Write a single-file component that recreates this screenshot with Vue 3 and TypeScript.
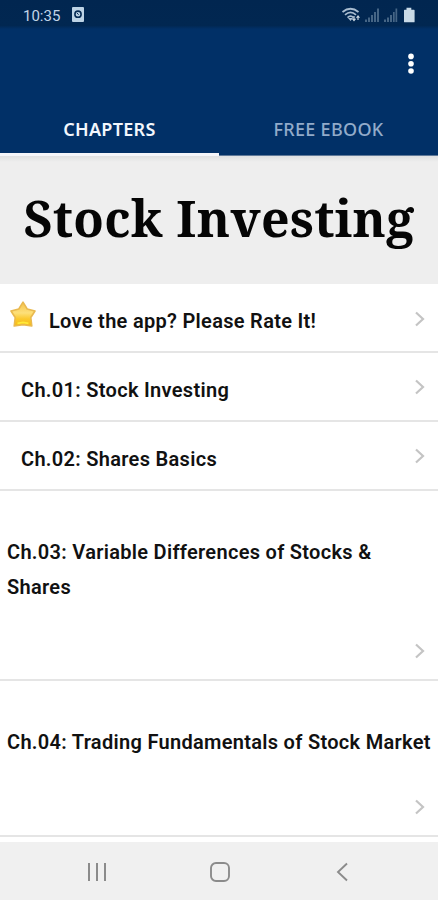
<script setup lang="ts">
interface Row {
  label: string
  kind: string
  star?: boolean
}

const rows: Row[] = [
  { label: 'Love the app? Please Rate It!', kind: 'rate', star: true },
  { label: 'Ch.01: Stock Investing', kind: 'short' },
  { label: 'Ch.02: Shares Basics', kind: 'short' },
  { label: 'Ch.03: Variable Differences of Stocks & Shares', kind: 'tall double' },
  { label: 'Ch.04: Trading Fundamentals of Stock Market', kind: 'tall single' },
]
</script>

<template>
  <div class="screen">
    <header class="header">
      <div class="status">
        <span class="time">10:35</span>
        <svg class="alarm" width="12" height="15" viewBox="0 0 12 15">
          <rect width="12" height="15" rx="1" fill="#bdd3e5" />
          <circle cx="6" cy="7.2" r="3.1" fill="none" stroke="#062b54" stroke-width="1.6" />
          <path d="M5 6l1.6 1.7" stroke="#062b54" stroke-width="1" />
        </svg>
        <svg class="signals" width="76" height="17" viewBox="0 0 76 17">
          <g fill="none" stroke="#a9bdd0" stroke-width="1.7">
            <path d="M1.500 5Q9.500-1.500 17.500 5" />
            <path d="M4 7.800Q9.500 3 15 7.800" />
            <path d="M6.500 10.600Q9.500 7.800 12.500 10.600" />
          </g>
          <path d="M9.500 14l-2.500-3h5z" fill="#a9bdd0" />
          <path d="M13 9v4M17 13V9" stroke="#c5d4e0" stroke-width="1.2" />
          <path d="M10.800 11.800h4.400L13 14.600zM14.900 10.700h4.200L17 7.900z" fill="#c5d4e0" />
          <g fill="#456585">
            <path d="M24 12.5h2V15h-2zM27 10.5h2V15h-2zM30 8h2v7h-2zM33 5h2v10h-2zM36 1.5h2V15h-2z" />
            <path d="M43 12.5h2V15h-2zM46 10.5h2V15h-2zM49 8h2v7h-2zM52 5h1.700v10H52zM54.500 1.500h1.700V15h-1.700z" />
          </g>
          <path d="M65.500.8h4.800v2H73q.6 0 .6.6v11.300q0 .6-.6.6H63.600q-.6 0-.6-.6V3.400q0-.6.6-.6h1.900z" fill="#c9dae7" />
        </svg>
      </div>
      <div class="toolbar">
        <svg width="6" height="22" viewBox="0 0 6 22" fill="#fff">
          <circle cx="3" cy="3.4" r="2.8" />
          <circle cx="3" cy="10.7" r="2.8" />
          <circle cx="3" cy="18" r="2.8" />
        </svg>
      </div>
      <nav class="tabs">
        <div class="tab active"><span>CHAPTERS</span></div>
        <div class="tab"><span>FREE EBOOK</span></div>
      </nav>
    </header>
    <section class="hero"><h1>Stock Investing</h1></section>
    <main class="list">
      <div v-for="row in rows" :key="row.label" class="row" :class="row.kind">
        <svg v-if="row.star" class="star" width="28" height="28" viewBox="0 0 28 28">
          <defs>
            <linearGradient id="gold" x1="0" y1="0" x2="0" y2="1">
              <stop offset="0" stop-color="#f6c24a" />
              <stop offset=".45" stop-color="#fde07a" />
              <stop offset=".7" stop-color="#fbc92f" />
              <stop offset="1" stop-color="#f6bd13" />
            </linearGradient>
          </defs>
          <path d="M14 2.200L18.200 9L26 11L21.800 17.500L22.800 26L14 24.600L5.200 26L6.200 17.500L2 11L9.800 9Z" fill="url(#gold)" stroke="#e9b950" stroke-width="1.600" stroke-linejoin="round" />
          <path d="M8.500 23.300l5.500-1 5.500 1" fill="none" stroke="#ffea3a" stroke-width="1.800" />
        </svg>
        <span class="label">{{ row.label }}</span>
        <svg class="chevron" width="12" height="16" viewBox="0 0 12 16">
          <path d="M2 1.500L9 8L2 14.500" fill="none" stroke="#c4c4c4" stroke-width="2.200" />
        </svg>
      </div>
    </main>
    <footer class="navbar">
      <svg width="20" height="20" viewBox="0 0 20 20">
        <path d="M2 1v18M10 1v18M18 1v18" stroke="#8b8b8b" stroke-width="2" />
      </svg>
      <svg width="22" height="22" viewBox="0 0 22 22">
        <rect x="2" y="2" width="18" height="18" rx="5" fill="none" stroke="#8b8b8b" stroke-width="1.9" />
      </svg>
      <svg width="14" height="20" viewBox="0 0 14 20">
        <path d="M12 1.500L3 10l9 8.500" fill="none" stroke="#8b8b8b" stroke-width="1.9" />
      </svg>
    </footer>
  </div>
</template>

<style>
body {
  margin: 0;
}
</style>

<style scoped>
.screen {
  display: flex;
  flex-direction: column;
  width: 438px;
  height: 900px;
  overflow: hidden;
  background: #fff;
  font-family: Roboto, "Liberation Sans", sans-serif;
}
.header {
  display: flex;
  flex-direction: column;
  height: 156px;
  flex: none;
  background: #013067;
}
.status {
  display: flex;
  align-items: flex-start;
  box-sizing: border-box;
  height: 29px;
  padding: 7px 21px 0 23px;
  background: linear-gradient(#012650, #012751 88%, #013067);
}
.time {
  width: 49px;
  color: #c3d5e7;
  font-size: 15px;
  line-height: 19px;
}
.signals {
  margin-left: auto;
}
.toolbar {
  display: flex;
  justify-content: flex-end;
  box-sizing: border-box;
  height: 71px;
  padding: 24px 24px 0 0;
}
.tabs {
  display: flex;
  height: 56px;
}
.tab {
  box-sizing: border-box;
  width: 219px;
  padding-top: 17px;
  border-bottom: 1px solid #5f7999;
  color: #92abca;
  font-family: "Noto Sans", sans-serif;
  font-size: 18px;
  font-weight: 500;
  line-height: 24px;
  letter-spacing: 0.3px;
  text-align: center;
}
.tab.active {
  border-bottom: 3px solid #f4f5fa;
  color: #f3f7fd;
  font-weight: 600;
}
.hero {
  display: flex;
  justify-content: center;
  box-sizing: border-box;
  height: 128px;
  flex: none;
  padding-top: 29px;
  background: linear-gradient(#dedfe1, #eee 6px);
}
h1 {
  margin: 0;
  color: #050505;
  font-family: "Noto Serif", "DejaVu Serif", serif;
  font-size: 50px;
  font-weight: 700;
  line-height: 66px;
  letter-spacing: 0.3px;
  white-space: nowrap;
}
.list {
  height: 558px;
  flex: none;
}
.row {
  display: flex;
  box-sizing: border-box;
  border-bottom: 2px solid #e5e5e5;
  color: #111;
  font-size: 20px;
  font-weight: 600;
  line-height: 35px;
  letter-spacing: 0.3px;
}
.chevron {
  flex: none;
  margin-left: auto;
}
.rate {
  height: 69px;
  padding: 20px 12px 0 9px;
}
.rate .label {
  padding-left: 12px;
}
.rate .star {
  margin-top: -4px;
}
.rate .chevron {
  margin-top: 7px;
}
.short {
  height: 69px;
  padding: 20px 12px 0 21px;
}
.short .chevron {
  margin-top: 6px;
}
.tall {
  flex-direction: column;
  padding: 44px 0 0 7px;
}
.tall .chevron {
  margin-right: 12px;
}
.double {
  height: 190px;
}
.double .label {
  width: 400px;
}
.double .chevron {
  margin-top: 38px;
}
.single {
  height: 156px;
}
.single .label {
  white-space: nowrap;
}
.single .chevron {
  margin-top: 39px;
}
.navbar {
  display: grid;
  grid-template-columns: repeat(3, 122.5px);
  justify-content: center;
  place-items: center;
  height: 58px;
  flex: none;
  padding: 2px 0 0 1px;
  box-sizing: border-box;
  background: #f0f0f0;
}
</style>
